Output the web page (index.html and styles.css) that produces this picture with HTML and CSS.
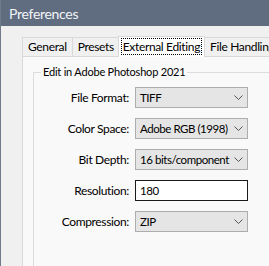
FILE: index.html
```html
<!DOCTYPE html>
<html>
<head>
<meta charset="utf-8">
<link rel="stylesheet" href="styles.css">
</head>
<body>
<div class="window">
  <div class="titlebar">Preferences</div>
  <div class="content">
    <div class="tabs">
      <div class="tab">General</div>
      <div class="tab">Presets</div>
      <div class="tab active"><span class="focus">External Editing</span></div>
      <div class="tab">File Handling</div>
    </div>
    <div class="pane">
      <div class="group">
        <div class="legend">Edit in Adobe Photoshop 2021</div>
        <div class="rows">
          <div class="row"><span class="label">File Format:</span><div class="select"><span>TIFF</span><svg class="chev" width="9" height="5" viewBox="0 0 9 5"><path d="M0.5 0.5 L4.5 4.5 L8.5 0.5" fill="none" stroke="#555" stroke-width="1"/></svg></div></div>
          <div class="row"><span class="label">Color Space:</span><div class="select"><span>Adobe RGB (1998)</span><svg class="chev" width="9" height="5" viewBox="0 0 9 5"><path d="M0.5 0.5 L4.5 4.5 L8.5 0.5" fill="none" stroke="#555" stroke-width="1"/></svg></div></div>
          <div class="row"><span class="label">Bit Depth:</span><div class="select"><span>16 bits/component</span><svg class="chev" width="9" height="5" viewBox="0 0 9 5"><path d="M0.5 0.5 L4.5 4.5 L8.5 0.5" fill="none" stroke="#555" stroke-width="1"/></svg></div></div>
          <div class="row"><span class="label">Resolution:</span><div class="input">180</div></div>
          <div class="row"><span class="label">Compression:</span><div class="select"><span>ZIP</span><svg class="chev" width="9" height="5" viewBox="0 0 9 5"><path d="M0.5 0.5 L4.5 4.5 L8.5 0.5" fill="none" stroke="#555" stroke-width="1"/></svg></div></div>
        </div>
      </div>
    </div>
  </div>
</div>
</body>
</html>
```
FILE: styles.css
```css
html, body {
  margin: 0;
  padding: 0;
  background: #f0f0f0;
}
body {
  font-family: Lato, "Liberation Sans", sans-serif;
  font-size: 12px;
  letter-spacing: -0.35px;
  color: #000;
  width: 269px;
  height: 266px;
  overflow: hidden;
}
.window {
  height: 266px;
  border-left: 1px solid #6f7a8b;
  box-sizing: border-box;
  display: flex;
  flex-direction: column;
}
.titlebar {
  height: 26px;
  background: #606d81;
  color: #f2f4f7;
  font-size: 14px;
  letter-spacing: -0.3px;
  line-height: 27px;
  padding-left: 8px;
  flex: none;
}
.content {
  flex: 1;
  padding: 10px 0 0 21px;
  display: flex;
  flex-direction: column;
  overflow: hidden;
}
.tabs {
  display: flex;
  height: 20px;
  align-items: flex-end;
  position: relative;
  z-index: 1;
}
.tab {
  height: 19px;
  box-sizing: border-box;
  border: 1px solid #d9d9d9;
  border-bottom: none;
  background: #f0f0f0;
  padding: 0 5px;
  line-height: 18px;
  white-space: nowrap;
  margin-right: -1px;
  flex: none;
}
.tab.active {
  height: 21px;
  background: #fff;
  margin: 0 -1px -1px -1px;
  padding: 1px 3px 0;
  border-color: #d9d9d9;
}
.focus {
  display: inline-block;
  outline: 1px dotted #000;
  line-height: 15px;
  padding: 0 1px;
}
.pane {
  flex: 1;
  border: 1px solid #d9d9d9;
  border-right: none;
  border-bottom: none;
  background: #f9f9f9;
  padding: 15px 0 0 10px;
}
.group {
  border: 1px solid #dcdcdc;
  border-right: none;
  border-bottom: none;
  height: 100%;
  position: relative;
}
.legend {
  position: absolute;
  top: -9px;
  left: 7px;
  background: #f9f9f9;
  padding: 0 2px;
  font-size: 11px;
  letter-spacing: -0.2px;
  line-height: 16px;
}
.rows {
  padding-top: 14px;
  display: flex;
  flex-direction: column;
  gap: 10px;
}
.row {
  display: flex;
  align-items: center;
  height: 21px;
}
.label {
  width: 95px;
  text-align: right;
  margin-right: 6px;
  white-space: nowrap;
  flex: none;
}
.select, .input {
  width: 113px;
  height: 21px;
  box-sizing: border-box;
  display: flex;
  align-items: center;
  padding-left: 4px;
  white-space: nowrap;
  flex: none;
  font-size: 11.5px;
  letter-spacing: -0.45px;
}
.select {
  background: #e5e5e5;
  border: 1px solid #adadad;
  justify-content: space-between;
  padding-right: 4px;
}
.input {
  background: #fff;
  border: 1px solid #1a1a1a;
}
```
